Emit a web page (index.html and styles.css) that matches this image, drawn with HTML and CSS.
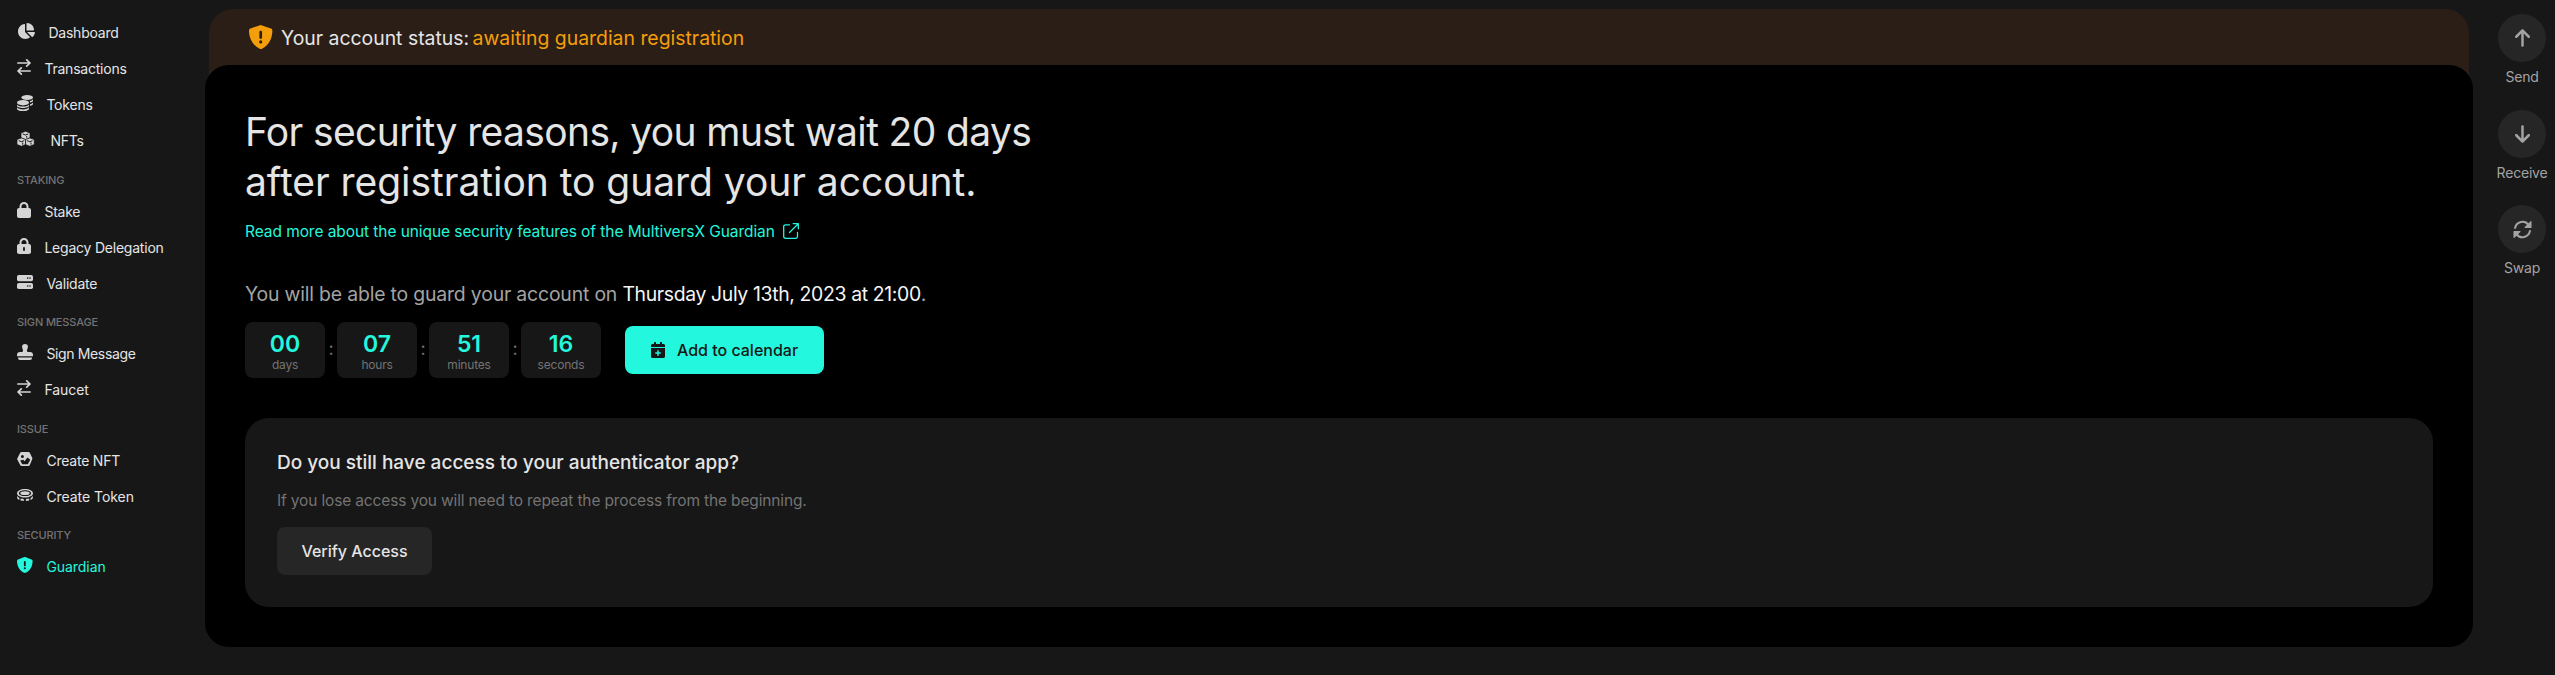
FILE: index.html
```html
<!DOCTYPE html>
<html lang="en">
<head>
<meta charset="utf-8">
<title>Guardian</title>
<link rel="stylesheet" href="styles.css">
</head>
<body>
<svg class="sprite" aria-hidden="true">
  <symbol id="pie" viewBox="0 0 576 512"><path d="M304 240V16.6c0-9 7-16.6 16-16.6C443.7 0 544 100.3 544 224c0 9-7.6 16-16.6 16H304zM32 272C32 150.7 122.1 50.3 239 34.3c9.2-1.3 17 6.1 17 15.4V288L412.5 444.5c6.7 6.7 6.2 17.7-1.5 23.1C371.8 495.6 323.8 512 272 512C139.5 512 32 404.6 32 272zm526.4 16c9.3 0 16.6 7.8 15.4 17c-7.7 55.9-34.6 105.6-73.9 142.3c-6 5.6-15.4 5.2-21.2-.7L320 288H558.4z"/></symbol>
  <symbol id="swap-lines" viewBox="0 0 14 16"><path d="M.8 4h12M9.7.9l3.3 3.1-3.3 3.1M13.2 12h-12M4.3 8.900 1 12l3.300 3.100" fill="none" stroke="currentColor" stroke-width="1.7" stroke-linecap="round" stroke-linejoin="round"/></symbol>
  <symbol id="coins" viewBox="0 0 16 16"><ellipse cx="10.2" cy="2.6" rx="5.8" ry="2.5"/><path d="M13 7.6c1.5-.4 2.6-1 3-1.7V4.3c-.5.9-1.7 1.5-3.3 1.9zM13 11c1.5-.4 2.6-1 3-1.7V7.500c-.5.8-1.500 1.300-3 1.700z"/><ellipse cx="6" cy="7.700" rx="6" ry="2.700"/><path d="M0 9.500c.8 1.500 3.200 2.100 6 2.100s5.200-.6 6-2.100v1.300c0 1.300-2.700 2.200-6 2.200s-6-.9-6-2.200zM0 12.300c.8 1.500 3.200 2.100 6 2.100s5.200-.6 6-2.100v1.400C12 15.100 9.300 16 6 16s-6-.9-6-2.300z"/></symbol>
  <symbol id="cubes" viewBox="0 0 20 16"><g stroke="#171717" stroke-width=".7" stroke-linejoin="round"><path d="M8.500.3 13 2v4.800L8.500 8.600 4 6.800V2z"/><path d="M4.400 6.900 8.600 8.500v5L4.400 15.200 0 13.500v-5zM12.800 6.900 17.200 8.500v5l-4.400 1.700-4.300-1.700v-5z"/></g><path d="M5.800 3 8.500 4l2.700-1M9.700 5v1.700M1.800 9.700l2.700 1 2.700-1M5.700 11.600v2M10.100 9.700l2.700 1 2.700-1M14 11.600v2" fill="none" stroke="#171717"/></symbol>
  <symbol id="lock" viewBox="0 0 448 512"><path d="M144 144v48H304V144c0-44.200-35.800-80-80-80s-80 35.800-80 80zM80 192V144C80 64.500 144.500 0 224 0s144 64.500 144 144v48h16c35.300 0 64 28.700 64 64V448c0 35.300-28.700 64-64 64H64c-35.300 0-64-28.700-64-64V256c0-35.300 28.700-64 64-64H80z"/></symbol>
  <symbol id="lock-key" viewBox="0 0 448 512"><path d="M144 144v48H304V144c0-44.200-35.800-80-80-80s-80 35.800-80 80zM80 192V144C80 64.500 144.500 0 224 0s144 64.500 144 144v48h16c35.300 0 64 28.700 64 64V448c0 35.300-28.700 64-64 64H64c-35.300 0-64-28.700-64-64V256c0-35.300 28.700-64 64-64H80z"/><rect x="194" y="288" width="60" height="128" rx="30" fill="#171717"/></symbol>
  <symbol id="server" viewBox="0 0 16 16"><rect y="1" width="16" height="6.200" rx="1.800"/><rect y="8.900" width="16" height="6.200" rx="1.800"/><g fill="#171717"><circle cx="10.700" cy="4.100" r=".8"/><circle cx="13" cy="4.100" r=".8"/><circle cx="10.700" cy="12" r=".8"/><circle cx="13" cy="12" r=".8"/></g></symbol>
  <symbol id="stamp" viewBox="0 0 16 16"><path d="M8 0a2.900 2.900 0 0 1 2.900 3c0 1.400-.9 2-.9 3.500v.6c0 .5.400.9.900.9H13a3 3 0 0 1 3 3v1.300H0V11a3 3 0 0 1 3-3h2.100c.5 0 .9-.4.9-.9v-.6C6 5 5.100 4.400 5.100 3A2.900 2.900 0 0 1 8 0zM1 13.400h14V14a2 2 0 0 1-2 2H3a2 2 0 0 1-2-2z"/></symbol>
  <symbol id="hex-image" viewBox="0 0 16 16"><path fill-rule="evenodd" d="M4.600 1h6.800c.6 0 1.100.3 1.400.8l2.400 4.900c.3.500.3 1 0 1.500l-2.400 5.900c-.3.500-.8.900-1.400.9H4.600c-.6 0-1.100-.3-1.400-.9L.4 8.700c-.3-.5-.3-1 0-1.500l2.800-5.400c.3-.5.800-.8 1.400-.8zM5.400 4a1.500 1.500 0 1 0 0 3 1.500 1.500 0 0 0 0-3zM3.200 9.500l2 3.700h5.600L13.300 8.800 10.400 6.400 7.600 10.300 6.200 8.700z"/></symbol>
  <symbol id="coin" viewBox="0 0 16 16"><path fill-rule="evenodd" d="M8 2c4.400 0 8 1.900 8 4.300s-3.600 4.300-8 4.300-8-1.900-8-4.300S3.600 2 8 2zm0 1.300C4.600 3.300 1.900 4.500 1.900 6.200S4.600 9.100 8 9.100s6.100-1.200 6.100-2.900S11.400 3.300 8 3.300z"/><ellipse cx="8" cy="6.200" rx="4.700" ry="1.900"/><path d="M.1 9.100c.6.900 1.300 1.400 2.300 1.900v2C1 12.300.1 11.400.1 10.400zM3.600 11.500c1 .3 2 .5 3.200.6v2c-1.200-.1-2.300-.3-3.200-.6zM8.900 12.100c1.200-.1 2.300-.3 3.300-.6v2c-1 .3-2.100.5-3.300.6zM13.600 11c1-.5 1.800-1.100 2.300-1.900v1.300c0 1-.9 1.900-2.300 2.600z"/></symbol>
  <symbol id="shield" viewBox="0 0 16 16"><path fill-rule="evenodd" d="M7.400.1c.2-.1.600-.1.800 0l6.400 2.300c.6.200 1 .8 1 1.500-.1 5.100-2.300 9.700-6.900 11.900-.5.200-1.100.2-1.600 0C2.500 13.600.1 9 0 3.900c0-.7.400-1.300 1-1.500zM7.800 3.900c-.5 0-.9.400-.9.900v3.600c0 .5.400.9.900.9s.9-.4.900-.9V4.800c0-.5-.4-.9-.9-.9zm0 6.300a1.050 1.050 0 1 0 0 2.100 1.050 1.050 0 0 0 0-2.100z"/></symbol>
  <symbol id="external" viewBox="0 0 16 16"><path d="M6.500 1.800H2.400A1.700 1.700 0 0 0 .7 3.500v10.100a1.700 1.700 0 0 0 1.700 1.700h10.400a1.700 1.700 0 0 0 1.700-1.700V9.400M10.200.7h5.100v5.100M15 1 6.500 9.500" fill="none" stroke="currentColor" stroke-width="1.300" stroke-linecap="round" stroke-linejoin="round"/></symbol>
  <symbol id="calendar" viewBox="0 0 14 16"><path fill-rule="evenodd" d="M4 0c.6 0 1 .4 1 1v1h4V1c0-.6.400-1 1-1s1 .4 1 1v1h1.500c.8 0 1.500.7 1.500 1.500V5H0V3.500C0 2.700.7 2 1.500 2H3V1c0-.6.400-1 1-1zM0 6h14v8.500c0 .8-.7 1.500-1.500 1.500h-11C.7 16 0 15.300 0 14.500zm6.250 2.250v2h-2v1.500h2v2h1.500v-2h2v-1.500h-2v-2z"/></symbol>
  <symbol id="arrow-up" viewBox="0 0 384 512"><path d="M214.600 41.400c-12.500-12.500-32.800-12.500-45.300 0l-160 160c-12.500 12.500-12.500 32.800 0 45.300s32.800 12.500 45.300 0L160 141.200V448c0 17.700 14.300 32 32 32s32-14.300 32-32V141.200L329.400 246.600c12.500 12.500 32.800 12.500 45.300 0s12.500-32.800 0-45.300l-160-160z"/></symbol>
  <symbol id="refresh" viewBox="0 0 20 20"><path d="M2.200 8.300A8 8 0 0 1 16.300 5M17.800 11.700A8 8 0 0 1 3.700 15" fill="none" stroke="currentColor" stroke-width="2.200" stroke-linecap="round"/><path d="M19.500 1.600v6.200c0 .4-.2.600-.6.600h-6.200c-.6 0-.8-.6-.4-1L18.500 1.200c.4-.4 1-.2 1 .4zM.5 18.400v-6.200c0-.4.200-.6.600-.6h6.200c.6 0 .8.600.4 1L1.500 18.800c-.4.400-1 .2-1-.4z"/></symbol>
</svg>
<div class="app">
  <nav class="sidebar">
    <a class="item"><svg class="icon w18"><use href="#pie"/></svg><span>Dashboard</span></a>
    <a class="item"><svg class="icon w14"><use href="#swap-lines"/></svg><span>Transactions</span></a>
    <a class="item"><svg class="icon w16"><use href="#coins"/></svg><span>Tokens</span></a>
    <a class="item"><svg class="icon w20"><use href="#cubes"/></svg><span>NFTs</span></a>
    <h2 class="group tall">STAKING</h2>
    <a class="item"><svg class="icon w14"><use href="#lock"/></svg><span>Stake</span></a>
    <a class="item"><svg class="icon w14"><use href="#lock-key"/></svg><span>Legacy Delegation</span></a>
    <a class="item"><svg class="icon w16"><use href="#server"/></svg><span>Validate</span></a>
    <h2 class="group">SIGN MESSAGE</h2>
    <a class="item"><svg class="icon w16"><use href="#stamp"/></svg><span class="tight">Sign Message</span></a>
    <a class="item"><svg class="icon w14"><use href="#swap-lines"/></svg><span class="loose">Faucet</span></a>
    <h2 class="group tall">ISSUE</h2>
    <a class="item"><svg class="icon w16"><use href="#hex-image"/></svg><span>Create NFT</span></a>
    <a class="item"><svg class="icon w16"><use href="#coin"/></svg><span class="loose">Create Token</span></a>
    <h2 class="group">SECURITY</h2>
    <a class="item active"><svg class="icon w16"><use href="#shield"/></svg><span class="loose">Guardian</span></a>
  </nav>
  <main class="main">
    <div class="banner"><svg class="banner-icon"><use href="#shield"/></svg><span class="status">Your account status:</span><span class="status pending">awaiting guardian registration</span></div>
    <section class="panel">
      <h1 class="title"><span class="line-one">For security reasons, you must wait 20 days</span><br>after registration to guard your account.</h1>
      <a class="more"><span>Read more about the unique security features of the MultiversX Guardian</span><svg class="more-icon"><use href="#external"/></svg></a>
      <p class="when">You will be able to guard your account on <span class="date">Thursday July 13th, 2023 at 21:00</span>.</p>
      <div class="timer">
        <div class="unit"><span class="num">00</span><span class="label">days</span></div><span class="colon">:</span>
        <div class="unit"><span class="num">07</span><span class="label">hours</span></div><span class="colon">:</span>
        <div class="unit"><span class="num">51</span><span class="label">minutes</span></div><span class="colon">:</span>
        <div class="unit"><span class="num">16</span><span class="label">seconds</span></div>
        <button class="button primary"><svg class="cal-icon"><use href="#calendar"/></svg><span>Add to calendar</span></button>
      </div>
      <div class="card">
        <h3 class="question">Do you still have access to your authenticator app?</h3>
        <p class="hint">If you lose access you will need to repeat the process from the beginning.</p>
        <button class="button secondary">Verify Access</button>
      </div>
    </section>
  </main>
  <aside class="actions">
    <a class="action"><span class="circle"><svg class="up"><use href="#arrow-up"/></svg></span><span class="caption">Send</span></a>
    <a class="action"><span class="circle"><svg class="up down"><use href="#arrow-up"/></svg></span><span class="caption">Receive</span></a>
    <a class="action"><span class="circle"><svg class="refresh"><use href="#refresh"/></svg></span><span class="caption">Swap</span></a>
  </aside>
</div>
</body>
</html>
```
FILE: styles.css
```css
* { box-sizing: border-box; margin: 0; padding: 0; }
body { background: #171717; color: #e5e5e5; font-family: Inter, "Liberation Sans", sans-serif; font-size: 16px; height: 675px; overflow: hidden; }
svg { fill: currentColor; flex: none; }
.sprite { display: none; }
.app { display: flex; height: 675px; }

.sidebar { width: 205px; padding: 13px 0 0 17px; }
.item { display: flex; align-items: center; gap: 13.4px; height: 36px; font-size: 14px; letter-spacing: -0.22px; color: #e5e5e5; }
.item span { padding-top: 2px; }
.item .icon { height: 16px; color: #d4d4d4; }
.item .tight { letter-spacing: -0.36px; }
.item .loose { letter-spacing: -0.05px; }
.w14 { width: 14px; }
.w16 { width: 16px; }
.w18 { width: 18px; }
.w20 { width: 20px; }
.item.active, .item.active .icon { color: #23f7dd; }
.group { display: flex; align-items: flex-end; height: 34px; padding-bottom: 5px; font-size: 11px; line-height: 14px; font-weight: 500; letter-spacing: -0.14px; color: #737373; }
.group.tall { height: 35px; }

.main { width: 2268px; padding-top: 9px; }
.banner { display: flex; align-items: center; height: 80px; margin: 0 4px; padding: 0 36px 24px 39.5px; border-radius: 24px 24px 0 0; background: #2b1e17; font-size: 19.4px; }
.banner-icon { width: 24px; height: 24px; margin-right: 8.500px; color: #f59e0b; }
.status { margin-right: 3.500px; padding-top: 2px; }
.pending { color: #f59e0b; }
.panel { position: relative; height: 582px; margin-top: -24px; padding: 42px 40px 40px; border-radius: 24px; background: #000; }
.title { font-size: 39px; line-height: 50px; font-weight: 400; letter-spacing: -0.04px; }
.line-one { letter-spacing: -0.63px; }
.more { display: flex; align-items: center; gap: 8px; height: 20px; margin-top: 14px; font-size: 15.5px; letter-spacing: -0.07px; color: #23f7dd; }
.more-icon { width: 16px; height: 16px; }
.when { margin-top: 38px; font-size: 19.4px; line-height: 30px; letter-spacing: -0.17px; color: #a3a3a3; }
.date { letter-spacing: -0.35px; color: #f5f5f5; }
.timer { display: flex; align-items: center; height: 56px; margin-top: 13px; }
.unit { display: flex; flex-direction: column; align-items: center; width: 80px; height: 56px; padding-top: 10px; border-radius: 8px; background: #171717; }
.num { font-size: 23px; line-height: 24px; font-weight: 600; color: #23f7dd; }
.label { padding-top: 1px; font-size: 12px; line-height: 16px; letter-spacing: -0.2px; color: #737373; }
.colon { width: 12px; padding-bottom: 3px; font-size: 18px; text-align: center; color: #737373; }
.button { display: flex; align-items: center; justify-content: center; height: 48px; border: 0; border-radius: 8px; font: 500 16px Inter, "Liberation Sans", sans-serif; }
.primary { width: 199px; margin-left: 24px; gap: 12px; background: #23f7dd; color: #171717; }
.cal-icon { width: 14px; height: 16px; }
.card { height: 189px; margin-top: 40px; padding: 32px; border-radius: 24px; background: #171717; }
.question { font-size: 19px; line-height: 26px; font-weight: 500; }
.hint { margin-top: 15px; font-size: 15.5px; line-height: 20px; letter-spacing: -0.15px; color: #737373; }
.secondary { width: 155px; margin-top: 16px; background: #262626; color: #e5e5e5; }

.actions { width: 82px; padding: 14px 0 0 16px; }
.action { display: flex; flex-direction: column; align-items: center; width: 66px; height: 95.5px; color: #a3a3a3; font-size: 14px; letter-spacing: -0.2px; }
.circle { display: flex; align-items: center; justify-content: center; width: 48px; height: 48px; border-radius: 50%; background: #262626; }
.up { width: 15px; height: 20px; }
.down { transform: rotate(180deg); }
.refresh { width: 19px; height: 19px; }
.caption { margin-top: 7px; line-height: 16px; }
```
